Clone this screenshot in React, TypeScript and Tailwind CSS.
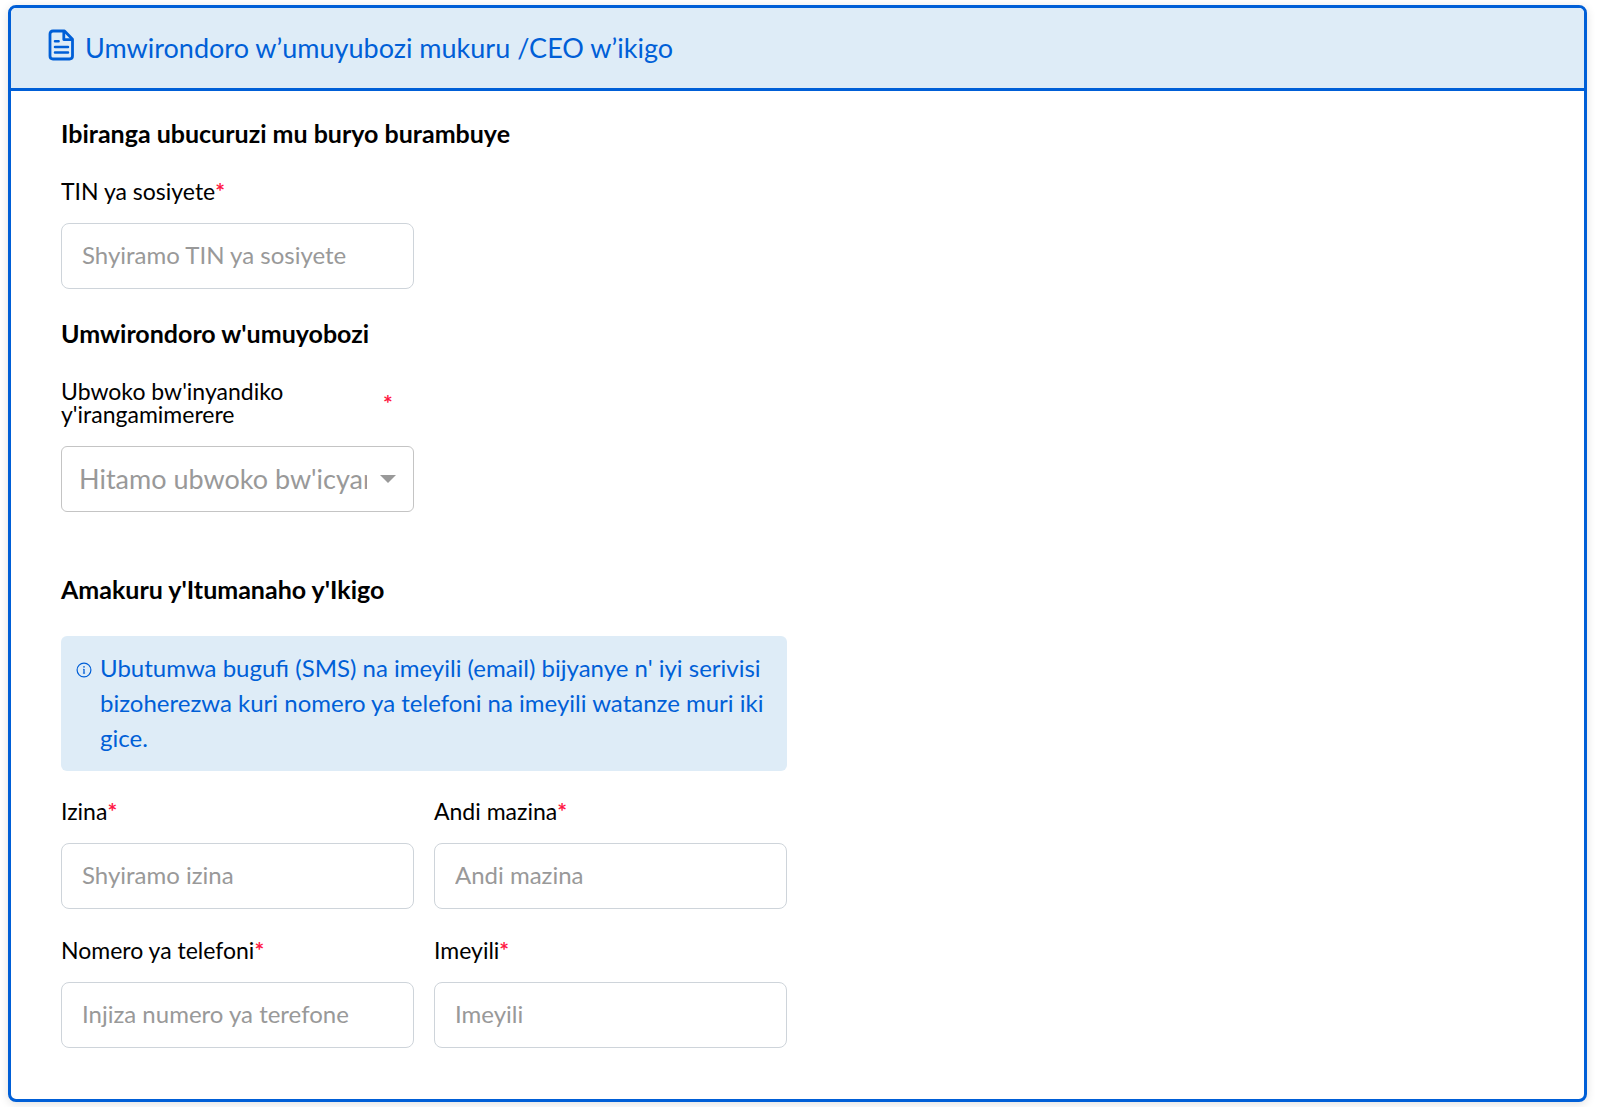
import { useId } from "react";

function DocumentIcon() {
  return (
    <svg className="mb-1.5 h-8 w-[27px] shrink-0" viewBox="0 0 27 32" fill="none" stroke="currentColor" strokeWidth="2.8" strokeLinejoin="round" aria-hidden="true">
      <path d="M16.5 2H5Q2 2 2 5V27Q2 30 5 30H21.5Q24.5 30 24.5 27V10.2Z" />
      <path d="M15.8 2.4V10.6H24.2" />
      <path d="M7 12.3H10.6M7 18.1H20M7 23.6H20" strokeWidth="2.5" strokeLinecap="round" />
    </svg>
  );
}

function InfoIcon() {
  return (
    <svg className="mt-3 size-4 shrink-0" viewBox="0 0 16 16" fill="none" stroke="currentColor" aria-hidden="true">
      <circle cx="8" cy="8" r="6.9" strokeWidth="1.2" />
      <path d="M8 7V11.4" strokeWidth="1.3" />
      <path d="M7 7.3H8M6.9 11.2H9.1" strokeWidth="0.7" />
      <circle cx="8" cy="4.9" r="0.8" fill="currentColor" stroke="none" />
    </svg>
  );
}

function Star() {
  return <span className="font-bold text-[#ff1744]">*</span>;
}

function TextField({ label, placeholder, type = "text" }: { label: string; placeholder: string; type?: string }) {
  const id = useId();
  return (
    <div className="flex flex-col gap-5">
      <label htmlFor={id} className="text-[23px] leading-[23px]">
        {label}
        <Star />
      </label>
      <input
        id={id}
        type={type}
        required
        placeholder={placeholder}
        className="h-[66px] w-full rounded-lg border border-[#ced4da] bg-white px-5 pb-1 text-[24px] shadow-none outline-none placeholder:text-[#999] focus:border-[#005fd7]"
      />
    </div>
  );
}

function SectionHeading({ children }: { children: string }) {
  return <h2 className="mb-8 text-[25px] leading-[30px] font-bold">{children}</h2>;
}

export default function App() {
  return (
    <main className="bg-white pt-[5px] pr-[13px] pb-[6px] pl-2 font-['Lato',sans-serif] text-black">
      <section className="overflow-hidden rounded-lg border-3 border-[#005fd7] bg-white shadow-[0_2px_10px_rgba(0,0,0,0.12)]">
        <header className="flex h-[83px] items-center gap-2.5 border-b-3 border-[#005fd7] bg-[#deecf7] px-[37px] text-[#005fd7]">
          <DocumentIcon />
          <h1 className="text-[27px] leading-9">Umwirondoro w’umuyubozi mukuru /CEO w’ikigo</h1>
        </header>

        <form className="px-[50px] pt-[27px] pb-[51px]">
          <div className="w-full max-w-[726px]">
            <SectionHeading>Ibiranga ubucuruzi mu buryo burambuye</SectionHeading>
            <div className="grid grid-cols-2 gap-5">
              <TextField label="TIN ya sosiyete" placeholder="Shyiramo TIN ya sosiyete" />
            </div>

            <div className="mt-[29px]">
              <SectionHeading>Umwirondoro w'umuyobozi</SectionHeading>
            </div>
            <div className="grid grid-cols-2 gap-5">
              <div className="flex flex-col gap-5">
                <label htmlFor="document-type" className="flex items-center text-[23px] leading-[23px]">
                  <span className="w-[322px]">Ubwoko bw'inyandiko y'irangamimerere</span>
                  <Star />
                </label>
                <div className="grid items-center">
                  <select
                    id="document-type"
                    defaultValue=""
                    required
                    className="col-start-1 row-start-1 h-[66px] w-full appearance-none rounded-md border border-[#c4c4c4] bg-white pr-[46px] pl-[17px] text-[27px] text-[#999] outline-none focus:border-[#005fd7]"
                  >
                    <option value="">Hitamo ubwoko bw'icyangombwa</option>
                  </select>
                  <svg className="pointer-events-none col-start-1 row-start-1 mr-[18px] h-2 w-4 justify-self-end" viewBox="0 0 16 8" fill="#999" aria-hidden="true">
                    <path d="M0 0H16L8 8Z" />
                  </svg>
                </div>
              </div>
            </div>

            <div className="mt-[62px]">
              <SectionHeading>Amakuru y'Itumanaho y'Ikigo</SectionHeading>
            </div>
            <div className="mb-[29px] flex gap-2 rounded-md bg-[#deecf7] px-[15px] pt-[14px] pb-4 text-[#005fd7]">
              <InfoIcon />
              <p className="text-[24px] leading-[35px]">
                Ubutumwa bugufi (SMS) na imeyili (email) bijyanye n' iyi serivisi bizoherezwa kuri nomero ya telefoni na imeyili watanze muri iki gice.
              </p>
            </div>

            <div className="grid grid-cols-2 gap-x-5 gap-y-[30px]">
              <TextField label="Izina" placeholder="Shyiramo izina" />
              <TextField label="Andi mazina" placeholder="Andi mazina" />
              <TextField label="Nomero ya telefoni" placeholder="Injiza numero ya terefone" type="tel" />
              <TextField label="Imeyili" placeholder="Imeyili" type="email" />
            </div>
          </div>
        </form>
      </section>
    </main>
  );
}
